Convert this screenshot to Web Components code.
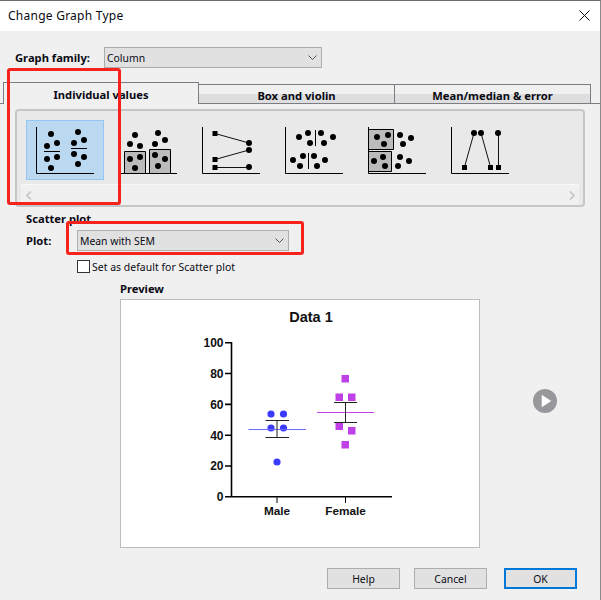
<!DOCTYPE html>
<html>
<head>
<meta charset="utf-8">
<title>Change Graph Type</title>
<style>
	html, body { margin: 0; padding: 0; background: #f0f0f0; }
</style>
</head>
<body>
<graph-dialog>
	<title-bar>Change Graph Type</title-bar>

	<form-row>
		<strong-label>Graph family:</strong-label>
		<combo-box style="width: 218px" value="Column"></combo-box>
	</form-row>

	<tab-strip>
		<strip-tab active>Individual values</strip-tab>
		<strip-tab>Box and violin</strip-tab>
		<strip-tab>Mean/median &amp; error</strip-tab>
	</tab-strip>

	<thumb-gallery>
		<graph-thumb kind="scatter" selected></graph-thumb>
		<graph-thumb kind="bars"></graph-thumb>
		<graph-thumb kind="pairs"></graph-thumb>
		<graph-thumb kind="split"></graph-thumb>
		<graph-thumb kind="boxes"></graph-thumb>
		<graph-thumb kind="peaks"></graph-thumb>
	</thumb-gallery>

	<plot-options></plot-options>
	<preview-pane></preview-pane>

	<button-row>
		<push-button>Help</push-button>
		<push-button>Cancel</push-button>
		<push-button default>OK</push-button>
	</button-row>

	<red-mark style="left: 7px; top: 67px; width: 108px; height: 131px"></red-mark>
	<red-mark style="left: 66px; top: 220px; width: 232px; height: 28px"></red-mark>
</graph-dialog>

<script>
const UI_FONT = `"Noto Sans", "Open Sans", sans-serif`;
const BOLD_SIZE = "11.2px";

class GraphDialog extends HTMLElement {
	constructor() {
		super();
		this.attachShadow({ mode: "open" });
		this.shadowRoot.innerHTML = `
			<style>
				:host {
					display: block;
					position: relative;
					box-sizing: border-box;
					width: 601px;
					height: 600px;
					overflow: hidden;
					background: #f0f0f0;
					border-top: 1px solid #6b6b6b;
					border-right: 1px solid #8a8a8a;
					font: 10.4px/15px ${UI_FONT};
					color: #0a0a14;
				}
			</style>
			<slot></slot>
		`;
	}
}

class TitleBar extends HTMLElement {
	constructor() {
		super();
		this.attachShadow({ mode: "open" });
		this.shadowRoot.innerHTML = `
			<style>
				:host {
					display: flex;
					align-items: center;
					justify-content: space-between;
					box-sizing: border-box;
					height: 30px;
					padding: 0 10px 2px 8px;
					background: #fff;
					font-size: 12px;
					letter-spacing: 0.25px;
				}
				svg { display: block; }
			</style>
			<span><slot></slot></span>
			<svg width="11" height="11" viewBox="0 0 11 11">
				<path d="M0.5 0.5 L10.5 10.5 M10.5 0.5 L0.5 10.5" stroke="#111" stroke-width="1" fill="none"/>
			</svg>
		`;
	}
}

class StrongLabel extends HTMLElement {
	constructor() {
		super();
		this.attachShadow({ mode: "open" });
		this.shadowRoot.innerHTML = `
			<style>
				:host {
					display: block;
					width: 89px;
					font-weight: bold;
					font-size: ${BOLD_SIZE};
					white-space: nowrap;
				}
			</style>
			<slot></slot>
		`;
	}
}

class FormRow extends HTMLElement {
	constructor() {
		super();
		this.attachShadow({ mode: "open" });
		this.shadowRoot.innerHTML = `
			<style>
				:host {
					display: flex;
					align-items: center;
					height: 21px;
					padding: 16px 0 0 15px;
				}
			</style>
			<slot></slot>
		`;
	}
}

class ComboBox extends HTMLElement {
	constructor() {
		super();
		this.attachShadow({ mode: "open" });
		this.shadowRoot.innerHTML = `
			<style>
				:host {
					display: flex;
					align-items: center;
					justify-content: space-between;
					box-sizing: border-box;
					height: 21px;
					padding: 0 4px 0 2px;
					background: #e1e1e1;
					border: 1px solid #adadad;
				}
				span { padding-top: 1px; }
				svg { display: block; }
			</style>
			<span>${this.getAttribute("value") || ""}</span>
			<svg width="9" height="5" viewBox="0 0 9 5">
				<path d="M0.5 0.5 L4.5 4.5 L8.5 0.5" stroke="#555" fill="none"/>
			</svg>
		`;
	}
}

class TabStrip extends HTMLElement {
	constructor() {
		super();
		this.attachShadow({ mode: "open" });
		this.shadowRoot.innerHTML = `
			<style>
				:host {
					display: flex;
					align-items: flex-end;
					box-sizing: border-box;
					height: 22px;
					margin-top: 14px;
					padding-left: 3px;
					background: linear-gradient(#7c7c84, #7c7c84) bottom / 100% 1px no-repeat;
				}
			</style>
			<slot></slot>
		`;
	}
}

class StripTab extends HTMLElement {
	constructor() {
		super();
		this.attachShadow({ mode: "open" });
		this.shadowRoot.innerHTML = `
			<style>
				:host {
					display: flex;
					align-items: center;
					justify-content: center;
					box-sizing: border-box;
					width: 196px;
					height: 20px;
					padding-top: 3px;
					border: 1px solid #7c7c84;
					border-left: none;
					font-weight: bold;
					font-size: ${BOLD_SIZE};
					background: linear-gradient(#f0f0f0 0, #f0f0f0 9px, #dedede 9px, #dedede 100%);
				}
				:host([active]) {
					height: 22px;
					padding-top: 1px;
					border-left: 1px solid #7c7c84;
					border-bottom: none;
					background: #f0f0f0;
				}
			</style>
			<slot></slot>
		`;
	}
}

class ThumbGallery extends HTMLElement {
	constructor() {
		super();
		this.attachShadow({ mode: "open" });
		this.shadowRoot.innerHTML = `
			<style>
				:host {
					display: block;
					box-sizing: border-box;
					width: 570px;
					height: 98px;
					margin: 5px 0 0 15px;
					background: #e9e9e9;
					border: 2px solid #c6c6c6;
					border-radius: 4px;
				}
				.items {
					display: flex;
					gap: 5px;
					height: 62px;
					padding: 9px 0 0 9px;
				}
				.bar {
					display: flex;
					align-items: center;
					justify-content: space-between;
					height: 20px;
					margin: 2px 4px 0;
					padding: 0 4px 0 5px;
					background: #f0f0f0;
					border-top: 1px solid #f8f8f8;
				}
				svg { display: block; }
			</style>
			<div class="items"><slot></slot></div>
			<div class="bar">
				<svg width="6" height="9" viewBox="0 0 6 9"><path d="M5 0.5 L1 4.5 L5 8.5" stroke="#c4c4c4" stroke-width="1.6" fill="none"/></svg>
				<svg width="6" height="9" viewBox="0 0 6 9"><path d="M1 0.5 L5 4.5 L1 8.5" stroke="#c4c4c4" stroke-width="1.6" fill="none"/></svg>
			</div>
		`;
	}
}

const DOT_SETS = {
	scatter: [[25,14],[31,23],[21,26],[21,39],[31,37],[25,48],[52,12],[58,20],[48,23],[48,34],[58,37],[52,44]],
	bars: [[26,15],[21,24],[31,26],[21,39],[31,37],[26,48],[49,13],[56,20],[46,24],[46,35],[56,39],[49,46]],
	pairs: [[57,23],[57,30],[57,47]],
	split: [[24,17],[33,13],[46,13],[58,17],[35,23],[49,23],[18,40],[28,36],[39,36],[50,40],[25,46],[42,46]],
	boxes: [[19,17],[30,15],[26,24],[42,15],[53,18],[45,24],[16,41],[25,37],[27,46],[42,37],[51,41],[40,46]],
	peaks: [[33,13],[40,13],[57,13]],
};

const THUMB_EXTRAS = {
	scatter: `<path d="M18 31.5 H34 M45 28.5 H61" stroke="#000"/>`,
	bars: `<path d="M15.5 53 V31.5 H36.5 V53 M40.5 53 V29.5 H61.5 V53" fill="#bbb" stroke="#000"/>`,
	pairs: `<path d="M23 13.5 L57 23 M23 39.5 L57 30 M23 47.5 H57" stroke="#111"/>
		<path d="M20.5 11h5v5h-5z M20.5 37h5v5h-5z M20.5 45h5v5h-5z" fill="#000"/>`,
	split: `<path d="M40.5 10 V26 M33.5 33 V49" stroke="#000"/>`,
	boxes: `<path d="M10.5 9.5 H35.5 V29.5 H10.5 Z M10.5 31.5 H33.5 V51.5 H10.5 Z" fill="#bbb" stroke="#000"/>`,
	peaks: `<path d="M23.5 47 L33 13 M40 13 L49.5 47 M57.5 47 V13" stroke="#111"/>
		<path d="M21 45h5v5h-5z M47 45h5v5h-5z M55 45h5v5h-5z" fill="#000"/>`,
};

class GraphThumb extends HTMLElement {
	constructor() {
		super();
		this.attachShadow({ mode: "open" });
		const kind = this.getAttribute("kind");
		const dots = DOT_SETS[kind].map(([x, y]) => `<circle cx="${x}" cy="${y}" r="3"/>`).join("");
		this.shadowRoot.innerHTML = `
			<style>
				:host {
					display: block;
					box-sizing: border-box;
					width: 78px;
					height: 60px;
					border: 1px solid transparent;
				}
				:host([selected]) {
					background: #bbd8f1;
					border-color: #93c6f3;
				}
				svg { display: block; margin: -1px; }
			</style>
			<svg width="78" height="60" viewBox="0 0 78 60">
				${THUMB_EXTRAS[kind]}
				<g fill="#000">${dots}</g>
				<path d="M10.5 7 V53.5 H68" stroke="#000" fill="none"/>
			</svg>
		`;
	}
}

class PlotOptions extends HTMLElement {
	constructor() {
		super();
		this.attachShadow({ mode: "open" });
		this.shadowRoot.innerHTML = `
			<style>
				:host {
					display: block;
					padding: 4px 0 0 26px;
				}
				.head { font-weight: bold; font-size: ${BOLD_SIZE}; height: 15px; }
				.row {
					display: flex;
					align-items: center;
					height: 21px;
					margin-top: 4px;
				}
				.row b { width: 51px; font-size: ${BOLD_SIZE}; }
				combo-box { width: 212px; }
				.check {
					display: flex;
					align-items: center;
					gap: 2px;
					height: 13px;
					margin: 9px 0 0 51px;
				}
				.check i {
					box-sizing: border-box;
					width: 13px;
					height: 13px;
					background: #fff;
					border: 1px solid #333;
				}
				.check span { padding-top: 1px; letter-spacing: 0.05px; }
			</style>
			<div class="head">Scatter plot</div>
			<div class="row"><b>Plot:</b><combo-box value="Mean with SEM"></combo-box></div>
			<div class="check"><i></i><span>Set as default for Scatter plot</span></div>
		`;
	}
}

class PreviewPane extends HTMLElement {
	constructor() {
		super();
		this.attachShadow({ mode: "open" });
		this.shadowRoot.innerHTML = `
			<style>
				:host {
					display: grid;
					grid-template-columns: 360px 77px;
					padding: 8px 0 0 120px;
				}
				.head { grid-column: 1 / 3; font-weight: bold; font-size: ${BOLD_SIZE}; height: 18px; }
				.frame {
					box-sizing: border-box;
					width: 360px;
					height: 249px;
					background: #fff;
					border: 1px solid #bdbdbd;
				}
				.play { justify-self: end; margin-top: 90px; }
				svg { display: block; }
				text {
					font-family: "Liberation Sans", Arial, sans-serif;
					font-weight: bold;
					fill: #111;
				}
			</style>
			<div class="head">Preview</div>
			<div class="frame">
				<!-- chart coordinates are relative to the white frame, which starts at 121,300 -->
				<svg width="358" height="247" viewBox="121 300 358 247">
					<text x="311" y="322" text-anchor="middle" font-size="14.5">Data 1</text>
					<g font-size="12" text-anchor="end">
						<text x="223.5" y="347">100</text>
						<text x="223.5" y="378">80</text>
						<text x="223.5" y="409">60</text>
						<text x="223.5" y="440">40</text>
						<text x="223.5" y="470">20</text>
						<text x="223.5" y="501">0</text>
					</g>
					<path d="M231.5 342 V497 M225 342.7 H231 M225 373.5 H231 M225 404.4 H231 M225 435.2 H231 M225 466 H231 M225 496.8 H392" stroke="#000" stroke-width="1.6" fill="none"/>
					<path d="M277 497 V503 M345.5 497 V503" stroke="#000" fill="none"/>
					<g font-size="11.8" text-anchor="middle">
						<text x="277" y="515">Male</text>
						<text x="345.5" y="515">Female</text>
					</g>
					<g fill="#3b3bff">
						<circle cx="271" cy="414" r="3.6"/><circle cx="283.5" cy="414" r="3.6"/>
						<circle cx="271" cy="428" r="3.6"/><circle cx="283.5" cy="428" r="3.6"/>
						<circle cx="277" cy="462" r="3.6"/>
					</g>
					<g fill="#bf40e6">
						<rect x="341.5" y="375" width="7.5" height="7.5"/>
						<rect x="335.5" y="393.5" width="7.5" height="7.5"/><rect x="348" y="393.5" width="7.5" height="7.5"/>
						<rect x="335.5" y="422.5" width="7.5" height="7.5"/><rect x="348" y="427" width="7.5" height="7.5"/>
						<rect x="341.5" y="441" width="7.5" height="7.5"/>
					</g>
					<path d="M248.5 429.5 H306" stroke="#6a6aff" fill="none"/>
					<path d="M317 412.5 H374" stroke="#c040e8" fill="none"/>
					<path d="M277 420.5 V437.5 M265.5 420.5 H289 M265.5 437.5 H289 M345.5 402.5 V423 M334 402.5 H357 M334 422.5 H357" stroke="#222" fill="none"/>
				</svg>
			</div>
			<svg class="play" width="24" height="24" viewBox="0 0 24 24">
				<circle cx="12" cy="12" r="12" fill="#98989c"/>
				<path d="M8.7 5.7 L18.3 12 L8.7 18.3 Z" fill="#fff"/>
			</svg>
		`;
	}
}

class ButtonRow extends HTMLElement {
	constructor() {
		super();
		this.attachShadow({ mode: "open" });
		this.shadowRoot.innerHTML = `
			<style>
				:host {
					display: flex;
					gap: 14px;
					padding: 20px 0 0 327px;
				}
				::slotted(push-button:last-child) { margin-left: 3px; }
			</style>
			<slot></slot>
		`;
	}
}

class PushButton extends HTMLElement {
	constructor() {
		super();
		this.attachShadow({ mode: "open" });
		this.shadowRoot.innerHTML = `
			<style>
				:host {
					display: flex;
					align-items: center;
					justify-content: center;
					box-sizing: border-box;
					width: 73px;
					height: 21px;
					padding-top: 1px;
					background: #e1e1e1;
					border: 1px solid #adadad;
				}
				:host([default]) { border: 2px solid #0078d7; }
			</style>
			<slot></slot>
		`;
	}
}

// red annotation boxes drawn over the screenshot
class RedMark extends HTMLElement {
	constructor() {
		super();
		this.attachShadow({ mode: "open" });
		this.shadowRoot.innerHTML = `
			<style>
				:host {
					display: block;
					position: absolute;
					box-sizing: content-box;
					border: 3px solid #f5231c;
					border-radius: 3px;
				}
			</style>
		`;
	}
}

customElements.define("graph-dialog", GraphDialog);
customElements.define("title-bar", TitleBar);
customElements.define("strong-label", StrongLabel);
customElements.define("form-row", FormRow);
customElements.define("combo-box", ComboBox);
customElements.define("tab-strip", TabStrip);
customElements.define("strip-tab", StripTab);
customElements.define("thumb-gallery", ThumbGallery);
customElements.define("graph-thumb", GraphThumb);
customElements.define("plot-options", PlotOptions);
customElements.define("preview-pane", PreviewPane);
customElements.define("button-row", ButtonRow);
customElements.define("push-button", PushButton);
customElements.define("red-mark", RedMark);
</script>
</body>
</html>
